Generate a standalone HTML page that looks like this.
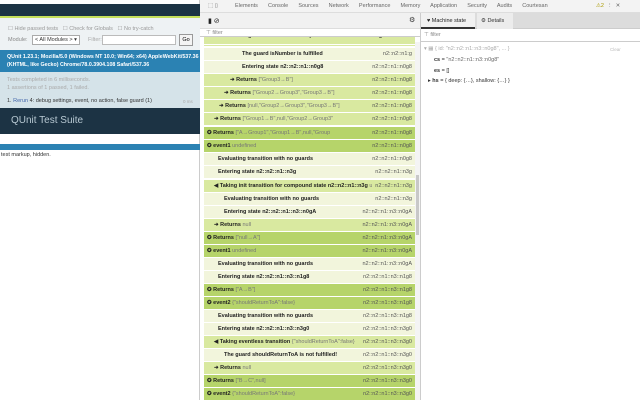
<!DOCTYPE html>
<html><head><meta charset="utf-8"><style>
*{margin:0;padding:0;box-sizing:border-box}
body{width:640px;height:400px;overflow:hidden;font-family:"Liberation Sans",sans-serif;background:#fff;position:relative}
.abs{position:absolute}
#left{left:0;top:0;width:200px;height:400px;background:#fff;border-right:1px solid #ccc}
.t{font-size:5.5px;white-space:nowrap}
#dev{left:200px;top:0;width:440px;height:400px;background:#fff;overflow:hidden}
.row{position:absolute;left:4px;width:211px;height:13px;border-bottom:1px solid #fff;font-size:5.5px;font-weight:bold;line-height:12px;color:#222;white-space:nowrap;overflow:hidden}
.row .r{position:absolute;right:3px;top:0;font-weight:normal;color:#555;padding-left:3px}
.g1{background:#b6d46a}.g2{background:#d9e9a0}.g3{background:#f2f5dc}
.g1 .r{background:#b6d46a}.g2 .r{background:#d9e9a0}.g3 .r{background:#f2f5dc}
.row i{font-style:normal;font-weight:normal;color:#777}
</style></head><body>
<div id="left" class="abs">
 <div class="abs" style="left:0;top:4px;width:200px;height:12px;background:#1c3344"></div>
 <div class="abs" style="left:0;top:16px;width:200px;height:2px;background:#c5df5a"></div>
 <div class="abs" style="left:0;top:18px;width:200px;height:32px;background:#eef2f4"></div>
 <div class="abs t" style="left:8px;top:26px;color:#999">☐ Hide passed tests &nbsp; ☐ Check for Globals &nbsp; ☐ No try-catch</div>
 <div class="abs t" style="left:8px;top:37px;color:#888">Module:</div>
 <div class="abs t" style="left:32px;top:35px;width:48px;height:10px;border:1px solid #aaa;background:#fff;line-height:8px;padding-left:2px;color:#333">&lt; All Modules &gt; ▾</div>
 <div class="abs t" style="left:88px;top:37px;color:#aaa">Filter:</div>
 <div class="abs" style="left:102px;top:35px;width:74px;height:10px;border:1px solid #bbb;background:#fff"></div>
 <div class="abs t" style="left:179px;top:34px;width:14px;height:12px;border:1px solid #999;background:#f4f4f4;line-height:10px;text-align:center">Go</div>
 <div class="abs" style="left:0;top:50px;width:200px;height:22px;background:#2b82b3"></div>
 <div class="abs t" style="left:7px;top:53px;color:#fff;font-weight:bold;font-size:5.3px;line-height:8px">QUnit 1.23.1; Mozilla/5.0 (Windows NT 10.0; Win64; x64) AppleWebKit/537.36<br>(KHTML, like Gecko) Chrome/78.0.3904.108 Safari/537.36</div>
 <div class="abs" style="left:0;top:72px;width:200px;height:36px;background:#d5e3e9"></div>
 <div class="abs t" style="left:7px;top:76px;color:#aaa;line-height:8px">Tests completed in 6 milliseconds.<br>1 assertions of 1 passed, 1 failed.</div>
 <div class="abs t" style="left:7px;top:98px;color:#333">1. <span style="color:#4466aa">Rerun</span> 4: debug settings, event, no action, false guard (1)</div>
 <div class="abs t" style="left:183px;top:99px;color:#aaa;font-size:4.5px">0 ms</div>
 <div class="abs" style="left:0;top:108px;width:200px;height:26px;background:#1c3344"></div>
 <div class="abs" style="left:11px;top:115px;color:#b7c8d2;font-size:10px">QUnit Test Suite</div>
 <div class="abs" style="left:0;top:144px;width:200px;height:6px;background:#2b82b3"></div>
 <div class="abs t" style="left:1px;top:152px;color:#333">test markup, hidden.</div>
</div>
<div id="dev" class="abs">
 <div class="abs" style="left:4px;top:42px;width:211px;height:4px;background:#d9e9a0"></div>
 <div class="row g2" style="top:33px;height:12px;line-height:6px"><span style="padding-left:30px">Taking init transition for compound state n2::n2::n1::n0g</span></div>
 <div class="row g3" style="top:48px"><span style="padding-left:38px">The guard isNumber is fulfilled</span><span class="r">n2::n2::n1:g</span></div>
 <div class="row g3" style="top:61px"><span style="padding-left:38px">Entering state n2::n2::n1::n0g8</span><span class="r">n2::n2::n1::n0g8</span></div>
 <div class="row g2" style="top:74px"><span style="padding-left:26px">➜ Returns <i>["Group3→B"]</i></span><span class="r">n2::n2::n1::n0g8</span></div>
 <div class="row g2" style="top:87px"><span style="padding-left:20px">➜ Returns <i>["Group2→Group3","Group3→B"]</i></span><span class="r">n2::n2::n1::n0g8</span></div>
 <div class="row g2" style="top:100px"><span style="padding-left:15px">➜ Returns <i>[null,"Group2→Group3","Group3→B"]</i></span><span class="r">n2::n2::n1::n0g8</span></div>
 <div class="row g2" style="top:113px"><span style="padding-left:10px">➜ Returns <i>["Group1→B",null,"Group2→Group3"</i></span><span class="r">n2::n2::n1::n0g8</span></div>
 <div class="row g1" style="top:127px"><span style="padding-left:3px">✪ Returns <i>["A→Group1","Group1→B",null,"Group</i></span><span class="r">n2::n2::n1::n0g8</span></div>
 <div class="row g1" style="top:140px"><span style="padding-left:3px">✪ event1 <i>undefined</i></span><span class="r">n2::n2::n1::n0g8</span></div>
 <div class="row g3" style="top:153px"><span style="padding-left:14px">Evaluating transition with no guards</span><span class="r">n2::n2::n1::n0g8</span></div>
 <div class="row g3" style="top:166px"><span style="padding-left:14px">Entering state n2::n2::n1::n3g</span><span class="r">n2::n2::n1::n3g</span></div>
 <div class="row g2" style="top:180px"><span style="padding-left:10px">◀ Taking init transition for compound state n2::n2::n1::n3g <i>undef</i></span><span class="r">n2::n2::n1::n3g</span></div>
 <div class="row g3" style="top:193px"><span style="padding-left:20px">Evaluating transition with no guards</span><span class="r">n2::n2::n1::n3g</span></div>
 <div class="row g3" style="top:206px"><span style="padding-left:20px">Entering state n2::n2::n1::n3::n0gA</span><span class="r">n2::n2::n1::n3::n0gA</span></div>
 <div class="row g2" style="top:219px"><span style="padding-left:10px">➜ Returns <i>null</i></span><span class="r">n2::n2::n1::n3::n0gA</span></div>
 <div class="row g1" style="top:232px"><span style="padding-left:3px">✪ Returns <i>["null→A"]</i></span><span class="r">n2::n2::n1::n3::n0gA</span></div>
 <div class="row g1" style="top:245px"><span style="padding-left:3px">✪ event1 <i>undefined</i></span><span class="r">n2::n2::n1::n3::n0gA</span></div>
 <div class="row g3" style="top:258px"><span style="padding-left:14px">Evaluating transition with no guards</span><span class="r">n2::n2::n1::n3::n0gA</span></div>
 <div class="row g3" style="top:271px"><span style="padding-left:14px">Entering state n2::n2::n1::n3::n1g8</span><span class="r">n2::n2::n1::n3::n1g8</span></div>
 <div class="row g1" style="top:284px"><span style="padding-left:3px">✪ Returns <i>["A→B"]</i></span><span class="r">n2::n2::n1::n3::n1g8</span></div>
 <div class="row g1" style="top:297px"><span style="padding-left:3px">✪ event2 <i>{"shouldReturnToA":false}</i></span><span class="r">n2::n2::n1::n3::n1g8</span></div>
 <div class="row g3" style="top:310px"><span style="padding-left:14px">Evaluating transition with no guards</span><span class="r">n2::n2::n1::n3::n1g8</span></div>
 <div class="row g3" style="top:323px"><span style="padding-left:14px">Entering state n2::n2::n1::n3::n3g0</span><span class="r">n2::n2::n1::n3::n3g0</span></div>
 <div class="row g2" style="top:336px"><span style="padding-left:10px">◀ Taking eventless transition <i>{"shouldReturnToA":false}</i></span><span class="r">n2::n2::n1::n3::n3g0</span></div>
 <div class="row g3" style="top:349px"><span style="padding-left:20px">The guard shouldReturnToA is not fulfilled!</span><span class="r">n2::n2::n1::n3::n3g0</span></div>
 <div class="row g2" style="top:362px"><span style="padding-left:10px">➜ Returns <i>null</i></span><span class="r">n2::n2::n1::n3::n3g0</span></div>
 <div class="row g1" style="top:375px"><span style="padding-left:3px">✪ Returns <i>["B→C",null]</i></span><span class="r">n2::n2::n1::n3::n3g0</span></div>
 <div class="row g1" style="top:388px"><span style="padding-left:3px">✪ event2 <i>{"shouldReturnToA":false}</i></span><span class="r">n2::n2::n1::n3::n3g0</span></div>
 <div class="abs" style="left:0;top:0;width:440px;height:13px;background:#f3f3f3;border-bottom:1px solid #ddd"></div>
 <div class="abs t" style="left:8px;top:3px;color:#666">⬚ ▯</div>
 <div class="abs t" style="left:35px;top:3px;color:#666;word-spacing:1px">Elements &nbsp;&nbsp; Console &nbsp;&nbsp; Sources &nbsp;&nbsp; Network &nbsp;&nbsp; Performance &nbsp;&nbsp; Memory &nbsp;&nbsp; Application &nbsp;&nbsp; Security &nbsp;&nbsp; Audits &nbsp;&nbsp; Courtesan</div>
 <div class="abs t" style="left:396px;top:3px;color:#a90">⚠2 &nbsp;<span style="color:#666">⋮ &nbsp;✕</span></div>
 <div class="abs" style="left:0;top:13px;width:220px;height:16px;background:#f1f1f1;border-bottom:1px solid #ddd"></div>
 <div class="abs t" style="left:8px;top:17px;color:#222;font-size:7px">▮ ⊘</div>
 <div class="abs t" style="left:209px;top:16px;color:#333;font-size:7px">⚙</div>
 <div class="abs" style="left:0;top:29px;width:220px;height:8px;border-bottom:1px solid #ccc;background:#fff"></div>
 <div class="abs t" style="left:6px;top:30px;color:#888">⊤ filter</div>
 <div class="abs" style="left:215px;top:42px;width:5px;height:358px;background:#f4f4f4"></div>
 <div class="abs" style="left:216px;top:175px;width:3px;height:60px;background:#c8c8c8"></div>
 <div class="abs" style="left:220px;top:13px;width:220px;height:16px;background:#dcdcdc;border-bottom:1px solid #ccc;border-left:1px solid #ccc"></div>
 <div class="abs t" style="left:221px;top:13px;width:54px;height:16px;background:#f1f1f1;line-height:16px;padding-left:6px;color:#222;border-bottom:2px solid #333">♥ Machine state</div>
 <div class="abs t" style="left:277px;top:13px;width:36px;height:16px;background:#ececec;line-height:16px;padding-left:4px;color:#333">⚙ Details</div>
 <div class="abs" style="left:220px;top:29px;width:220px;height:13px;border-bottom:1px solid #ccc;border-left:1px solid #ccc;background:#fff"></div>
 <div class="abs t" style="left:224px;top:32px;color:#888">⊤ filter</div>
 <div class="abs" style="left:220px;top:42px;width:220px;height:358px;background:#fff;border-left:1px solid #ccc"></div>
 <div class="abs t" style="left:224px;top:46px;color:#aaa">▾ ▦ { id: "n2::n2::n1::n3::n0g8", ... }</div>
 <div class="abs t" style="left:410px;top:47px;color:#bbb;font-size:4.5px">Clear</div>
 <div class="abs t" style="left:234px;top:57px;color:#333"><b>cs</b> = <span style="color:#666">"n2::n2::n1::n3::n0g8"</span></div>
 <div class="abs t" style="left:234px;top:68px;color:#333"><b>es</b> = []</div>
 <div class="abs t" style="left:228px;top:78px;color:#333">▸ <b>hs</b> = { deep: {…}, shallow: {…} }</div>
</div>
</body></html>
